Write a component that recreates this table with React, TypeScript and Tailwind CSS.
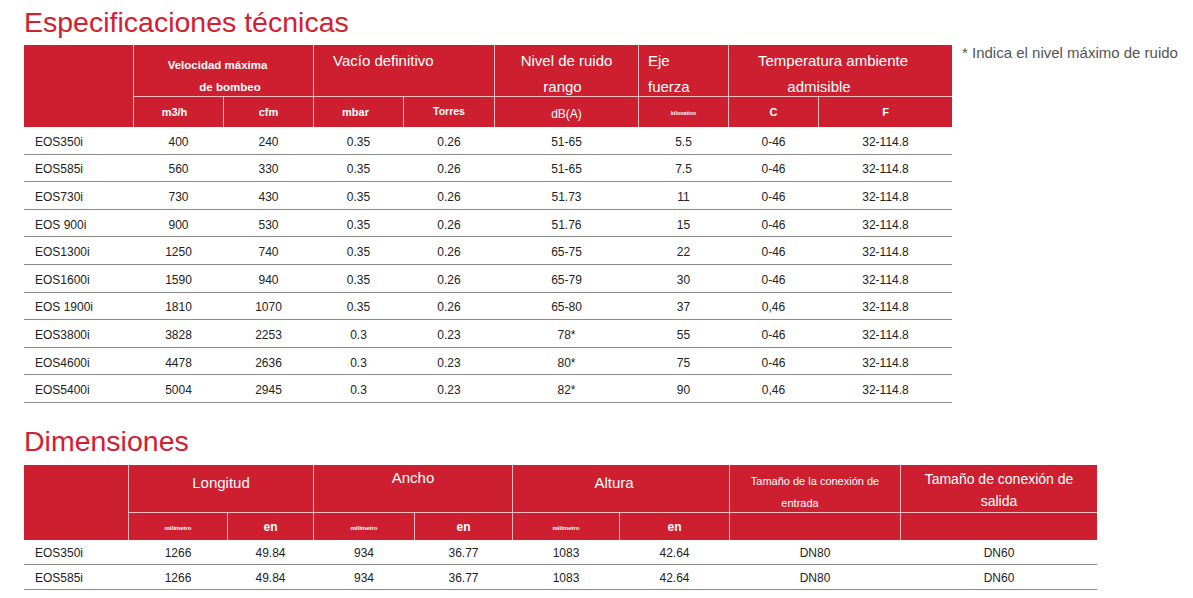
const specRows = [
  ["EOS350i", "400", "240", "0.35", "0.26", "51-65", "5.5", "0-46", "32-114.8"],
  ["EOS585i", "560", "330", "0.35", "0.26", "51-65", "7.5", "0-46", "32-114.8"],
  ["EOS730i", "730", "430", "0.35", "0.26", "51.73", "11", "0-46", "32-114.8"],
  ["EOS 900i", "900", "530", "0.35", "0.26", "51.76", "15", "0-46", "32-114.8"],
  ["EOS1300i", "1250", "740", "0.35", "0.26", "65-75", "22", "0-46", "32-114.8"],
  ["EOS1600i", "1590", "940", "0.35", "0.26", "65-79", "30", "0-46", "32-114.8"],
  ["EOS 1900i", "1810", "1070", "0.35", "0.26", "65-80", "37", "0,46", "32-114.8"],
  ["EOS3800i", "3828", "2253", "0.3", "0.23", "78*", "55", "0-46", "32-114.8"],
  ["EOS4600i", "4478", "2636", "0.3", "0.23", "80*", "75", "0-46", "32-114.8"],
  ["EOS5400i", "5004", "2945", "0.3", "0.23", "82*", "90", "0,46", "32-114.8"],
];

const dimRows = [
  ["EOS350i", "1266", "49.84", "934", "36.77", "1083", "42.64", "DN80", "DN60"],
  ["EOS585i", "1266", "49.84", "934", "36.77", "1083", "42.64", "DN80", "DN60"],
];

// grid templates, 1px gaps act as the light header rules
const specCols = "grid-cols-[109px_89px_89px_89px_90px_143px_89px_89px_133px]";
const dimCols = "grid-cols-[104px_98px_85px_100px_97px_106px_109px_170px_196px]";

const red = "bg-[#cd1f2f] text-white";
const unit = "bg-[#cd1f2f] text-white flex items-center justify-center";

const DataRow = ({ cells, cols, h }: { cells: string[]; cols: string; h: string }) => (
  <div className={`grid ${cols} gap-x-px ${h} items-center border-b border-[#8a8a8a] pt-[3px] text-[12px] text-[#222]`}>
    {cells.map((c, i) => (
      <div key={i} className={i === 0 ? "pl-[11px]" : "text-center"}>
        {c}
      </div>
    ))}
  </div>
);

const App = () => {
  return (
    <div className="min-h-[598px] bg-white pl-[24px] font-['Liberation_Sans',Arial,sans-serif]">
      <h1 className="mt-[7px] mb-[8.5px] text-[28.5px] leading-none text-[#d3202f] pt-px">
        Especificaciones técnicas
      </h1>

      <div className="flex items-start">
        <div className="w-[928px]">
          {/* header */}
          <div className={`grid ${specCols} grid-rows-[51px_30px] gap-px bg-[#efbcc0]`}>
            <div className={`${red} row-span-2`} />
            <div className={`${red} col-span-2 pt-[9px] text-center text-[11.5px] font-bold leading-[22px]`}>
              <div className="pr-[12px]">Velocidad máxima</div>
              <div className="pl-[13px]">de bombeo</div>
            </div>
            <div className={`${red} col-span-2 pl-[19px] pt-[3px] text-[15px] leading-[26px]`}>
              Vacío definitivo
            </div>
            <div className={`${red} pt-[3px] text-center text-[15px] leading-[26px]`}>
              <div>Nivel de ruido</div>
              <div className="pr-[8px]">rango</div>
            </div>
            <div className={`${red} pl-[9px] pt-[3px] text-[15px] leading-[26px]`}>
              <div>Eje</div>
              <div>fuerza</div>
            </div>
            <div className={`${red} col-span-2 pt-[3px] text-center text-[15px] leading-[26px]`}>
              <div className="pr-[15px]">Temperatura ambiente</div>
              <div className="pr-[43px]">admisible</div>
            </div>

            <div className={`${unit} text-[11px] font-bold pr-[8px]`}>m3/h</div>
            <div className={`${unit} text-[11px] font-bold`}>cfm</div>
            <div className={`${unit} text-[11px] font-bold pr-[6px]`}>mbar</div>
            <div className={`${unit} text-[10.5px] font-bold`}>Torres</div>
            <div className={`${unit} text-[12px] pt-[4px]`}>dB(A)</div>
            <div className={`${unit} text-[5.5px] font-bold pt-[2px]`}>kilovatios</div>
            <div className={`${unit} text-[11px] font-bold`}>C</div>
            <div className={`${unit} text-[11px] font-bold`}>F</div>
          </div>

          {specRows.map((r) => (
            <DataRow key={r[0]} cells={r} cols={specCols} h="h-[27.6px]" />
          ))}
        </div>

        <p className="ml-[10px] whitespace-nowrap text-[15px] leading-none text-[#555]">
          * Indica el nivel máximo de ruido
        </p>
      </div>

      <h2 className="mt-[24px] mb-[9.5px] text-[28.5px] leading-none text-[#d3202f]">Dimensiones</h2>

      <div className="w-[1073px]">
        <div className={`grid ${dimCols} grid-rows-[47px_27px] gap-px bg-[#efbcc0]`}>
          <div className={`${red} row-span-2`} />
          <div className={`${red} col-span-2 pt-[8px] text-center text-[15px] leading-[20px]`}>Longitud</div>
          <div className={`${red} col-span-2 pt-[3px] text-center text-[15px] leading-[20px]`}>Ancho</div>
          <div className={`${red} col-span-2 pt-[8px] pr-[14px] text-center text-[15px] leading-[20px]`}>Altura</div>
          <div className={`${red} pt-[5px] text-center text-[11px] leading-[22px]`}>
            <div>Tamaño de la conexión de</div>
            <div className="pr-[30px]">entrada</div>
          </div>
          <div className={`${red} pt-[3px] text-center text-[14px] leading-[22px]`}>
            <div>Tamaño de conexión de</div>
            <div>salida</div>
          </div>

          <div className={`${unit} text-[6px] font-bold pt-[5px]`}>milímetro</div>
          <div className={`${unit} text-[12px] font-bold pt-[2px]`}>en</div>
          <div className={`${unit} text-[6px] font-bold pt-[5px]`}>milímetro</div>
          <div className={`${unit} text-[12px] font-bold pt-[2px]`}>en</div>
          <div className={`${unit} text-[6px] font-bold pt-[5px]`}>milímetro</div>
          <div className={`${unit} text-[12px] font-bold pt-[2px]`}>en</div>
          <div className={red} />
          <div className={red} />
        </div>

        {dimRows.map((r) => (
          <DataRow key={r[0]} cells={r} cols={dimCols} h="h-[25px]" />
        ))}
      </div>
    </div>
  );
};

export default App;
